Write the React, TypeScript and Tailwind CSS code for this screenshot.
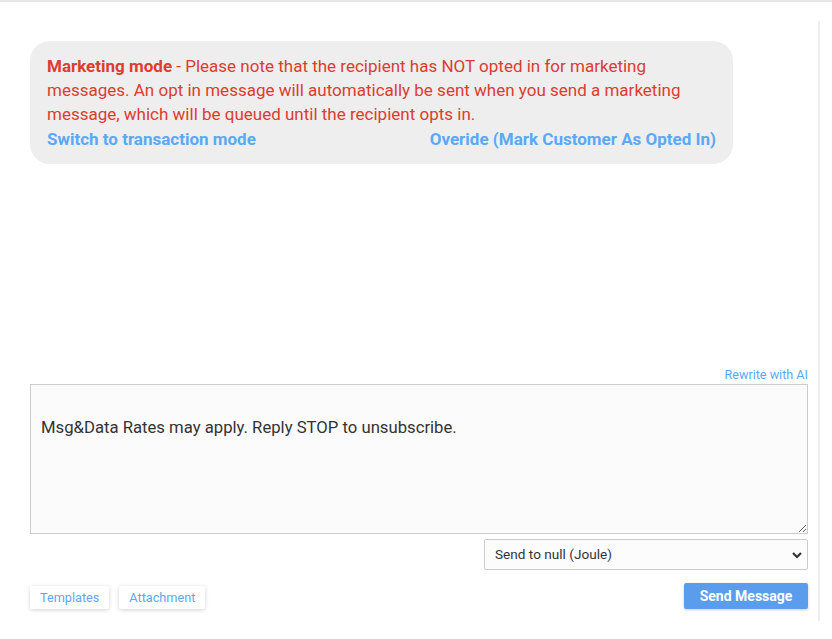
import React from "react";

export default function App() {
  return (
    <div
      className="w-[832px] h-[639px] bg-white border-t-2 border-[#e6e6e6] overflow-hidden"
      style={{ fontFamily: "Roboto, 'Liberation Sans', sans-serif" }}
    >
      <div className="flex">
        <div className="w-[778px] shrink-0 ml-[30px] flex flex-col">
          <div className="mt-[39px] w-[703px] rounded-[20px] bg-[#eeeeee] pl-[17px] pr-[17px] pt-[13px] pb-[13px] text-[17px] leading-[24px]">
            <p className="text-[#dd3c2e]">
              <span className="font-bold">Marketing mode</span> - Please note that the recipient has NOT opted in for marketing messages. An opt in message will automatically be sent when you send a marketing message, which will be queued until the recipient opts in.
            </p>
            <div className="mt-[1px] flex justify-between font-bold text-[#5aa9f6]">
              <span>Switch to transaction mode</span>
              <span>Overide (Mark Customer As Opted In)</span>
            </div>
          </div>

          <div className="mt-[203px] flex justify-end text-[12.6px] leading-[16px] text-[#5aa9f6]">
            Rewrite with AI
          </div>
          <textarea
            className="mt-[1px] h-[150px] w-[778px] border border-[#cccccc] bg-[#fbfbfb] px-[10px] pt-[7px] pb-[8px] text-[16.7px] leading-[24px] text-[#333333] outline-none resize-y"
            defaultValue={"\nMsg&Data Rates may apply. Reply STOP to unsubscribe."}
          />
          <div className="mt-[5px] flex justify-end">
            <div className="relative w-[324px] h-[31px] border border-[#cccccc] rounded-[2px] bg-[#fcfcfc] flex items-center pl-[10px] text-[13.6px] text-[#333333]">
              Send to null (Joule)
              <svg className="absolute right-[4px] top-[10px]" width="12" height="10" viewBox="0 0 12 10">
                <path d="M2 3 L6 7 L10 3" stroke="#333" strokeWidth="2.2" fill="none" />
              </svg>
            </div>
          </div>
          <div className="mt-[13px] flex items-start justify-between">
            <div className="flex gap-[10px] mt-[3px]">
              <button className="h-[23px] px-[10px] bg-white rounded-[2px] text-[12.7px] text-[#5aa9f6] shadow-[0_1px_4px_rgba(0,0,0,0.18)]">
                Templates
              </button>
              <button className="h-[23px] px-[10px] bg-white rounded-[2px] text-[12.7px] text-[#5aa9f6] shadow-[0_1px_4px_rgba(0,0,0,0.18)]">
                Attachment
              </button>
            </div>
            <button className="h-[26px] w-[124px] bg-[#5b9ded] rounded-[2px] text-[14px] font-bold text-white shadow-[0_1px_3px_rgba(0,0,0,0.2)]">
              Send Message
            </button>
          </div>
        </div>
        <div className="ml-[10px] mt-[19px] h-[600px] w-[2px] shrink-0 bg-[#eeeeee]" />
      </div>
    </div>
  );
}
